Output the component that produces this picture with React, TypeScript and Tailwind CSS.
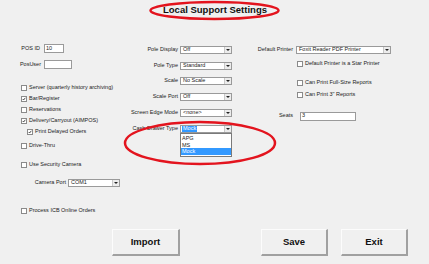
import { ReactNode } from 'react'

const font = { fontFamily: '"Liberation Sans", Arial, sans-serif' }

function Check() {
  return (
    <svg viewBox="0 0 6 6" className="w-full h-full">
      <path d="M1 3 L2.4 4.5 L5 1.2" fill="none" stroke="#111" strokeWidth="1.1" />
    </svg>
  )
}

function CheckBox({ checked = false }: { checked?: boolean }) {
  return (
    <div className="w-[6px] h-[6px] shrink-0 bg-white border border-[#8a8a8a] box-border">
      {checked && <Check />}
    </div>
  )
}

function CheckRow({
  label,
  checked,
  indent = 21,
  mt,
}: {
  label: string
  checked?: boolean
  indent?: number
  mt: string
}) {
  return (
    <div className={`flex items-center h-[10px] gap-[2px] ${mt}`} style={{ paddingLeft: indent }}>
      <CheckBox checked={checked} />
      <span className="text-[5.5px] leading-none text-[#222] whitespace-nowrap">{label}</span>
    </div>
  )
}

function Select({ value, w, selected = false }: { value: string; w: string; selected?: boolean }) {
  return (
    <div className={`relative flex items-stretch h-[8px] ${w} bg-white border border-[#9a9a9a] box-border`}>
      <div className="flex-1 flex items-center pl-[1px] overflow-hidden">
        <span
          className={`text-[5.5px] leading-none whitespace-nowrap px-[1px] ${
            selected ? 'bg-[#3399ff] text-white' : 'text-[#222]'
          }`}
        >
          {value}
        </span>
      </div>
      <div className="w-[7px] flex items-center justify-center bg-[#ececec] border-l border-[#c8c8c8]">
        <div className="w-0 h-0 border-l-[2px] border-r-[2px] border-t-[2px] border-l-transparent border-r-transparent border-t-[#222]" />
      </div>
    </div>
  )
}

function Input({ value = '', w }: { value?: string; w: string }) {
  return (
    <div className={`h-[9px] ${w} bg-white border border-[#9a9a9a] box-border flex items-center pl-[1px]`}>
      <span className="text-[5.5px] leading-none text-[#222]">{value}</span>
    </div>
  )
}

function Label({ children, w }: { children: ReactNode; w: string }) {
  return (
    <span className={`${w} text-right text-[5.5px] leading-none text-[#222] whitespace-nowrap`}>{children}</span>
  )
}

function MidRow({ label, value, mt, children }: { label: string; value: string; mt: string; children?: ReactNode }) {
  return (
    <div className={`flex items-center h-[8px] ${mt}`}>
      <Label w="w-[58px]">{label}</Label>
      <div className="ml-[2px] relative">
        <Select value={value} w="w-[52px]" selected={label === 'Cash Drawer Type'} />
        {children}
      </div>
    </div>
  )
}

function Button({ label, w }: { label: string; w: string }) {
  return (
    <button
      className={`${w} h-[27px] bg-[#f0f0f0] border-t border-l border-t-[#fcfcfc] border-l-[#fcfcfc] border-r-2 border-b-2 border-r-[#a0a0a0] border-b-[#a0a0a0] text-[9.5px] font-bold text-[#111] flex items-center justify-center`}
    >
      {label}
    </button>
  )
}

export default function App() {
  return (
    <div className="relative w-[429px] h-[264px] bg-[#f0f0f0] overflow-hidden" style={font}>
      <div className="h-[20px] flex items-center justify-center">
        <span className="text-[9.5px] font-bold text-[#111] ml-[1px]">Local Support Settings</span>
      </div>

      <div className="flex h-[209px]">
        {/* left column */}
        <div className="w-[120px] flex flex-col pt-[24px]">
          <div className="flex items-center h-[9px]">
            <Label w="w-[40px]">POS ID</Label>
            <div className="ml-[4px]">
              <Input value="10" w="w-[20px]" />
            </div>
          </div>
          <div className="flex items-center h-[9px] mt-[7px]">
            <Label w="w-[41px]">PosUser</Label>
            <div className="ml-[3px]">
              <Input w="w-[28px]" />
            </div>
          </div>
          <CheckRow label="Server (quarterly history archiving)" mt="mt-[14px]" />
          <CheckRow label="Bar/Register" checked mt="mt-[1px]" />
          <CheckRow label="Reservations" mt="mt-[1px]" />
          <CheckRow label="Delivery/Carryout (AIMPOS)" checked mt="mt-[1px]" />
          <CheckRow label="Print Delayed Orders" checked indent={27} mt="mt-[1px]" />
          <CheckRow label="Drive-Thru" mt="mt-[4px]" />
          <CheckRow label="Use Security Camera" mt="mt-[9px]" />
          <div className="flex items-center h-[10px] mt-[8px]">
            <Label w="w-[66px]">Camera Port</Label>
            <div className="ml-[2px]">
              <Select value="COM1" w="w-[52px]" />
            </div>
          </div>
          <CheckRow label="Process ICB Online Orders" mt="mt-[18px]" />
        </div>

        {/* middle column */}
        <div className="w-[120px] flex flex-col pt-[26px]">
          <MidRow label="Pole Display" value="Off" mt="" />
          <MidRow label="Pole Type" value="Standard" mt="mt-[8px]" />
          <MidRow label="Scale" value="No Scale" mt="mt-[7px]" />
          <MidRow label="Scale Port" value="Off" mt="mt-[8px]" />
          <MidRow label="Screen Edge Mode" value="<none>" mt="mt-[8px]" />
          <MidRow label="Cash Drawer Type" value="Mock" mt="mt-[8px]">
            <div className="absolute left-0 top-[8px] w-[52px] bg-white border border-[#7a7a7a] box-border flex flex-col py-[1px] z-10">
              {['APG', 'MS', 'Mock'].map((o) => (
                <span
                  key={o}
                  className={`h-[6.5px] text-[5.5px] leading-[6.5px] px-[1px] ${
                    o === 'Mock' ? 'bg-[#3399ff] text-white' : 'text-[#222]'
                  }`}
                >
                  {o}
                </span>
              ))}
            </div>
          </MidRow>
        </div>

        {/* right column */}
        <div className="flex-1 flex flex-col pt-[26px]">
          <div className="flex items-center h-[8px]">
            <Label w="w-[53px]">Default Printer</Label>
            <div className="ml-[3px]">
              <Select value="Foxit Reader PDF Printer" w="w-[95px]" />
            </div>
          </div>
          <CheckRow label="Default Printer is a Star Printer" indent={57} mt="mt-[5px]" />
          <CheckRow label="Can Print Full-Size Reports" indent={57} mt="mt-[9px]" />
          <CheckRow label={'Can Print 3" Reports'} indent={57} mt="mt-[2px]" />
          <div className="flex items-center h-[8px] mt-[12px]">
            <Label w="w-[53px]">Seats</Label>
            <div className="ml-[7px]">
              <Input value="3" w="w-[56px]" />
            </div>
          </div>
        </div>
      </div>

      <div className="flex">
        <div className="ml-[112px]">
          <Button label="Import" w="w-[68px]" />
        </div>
        <div className="ml-[81px]">
          <Button label="Save" w="w-[67px]" />
        </div>
        <div className="ml-[13px]">
          <Button label="Exit" w="w-[67px]" />
        </div>
      </div>

      {/* red annotation marks */}
      <svg className="absolute inset-0 pointer-events-none z-20" width="429" height="264">
        <ellipse cx="214.5" cy="10.5" rx="64" ry="8.5" fill="none" stroke="#e3141e" strokeWidth="2.5" />
        <ellipse cx="200" cy="143" rx="75" ry="21" fill="none" stroke="#e3141e" strokeWidth="2.5" />
      </svg>
    </div>
  )
}
